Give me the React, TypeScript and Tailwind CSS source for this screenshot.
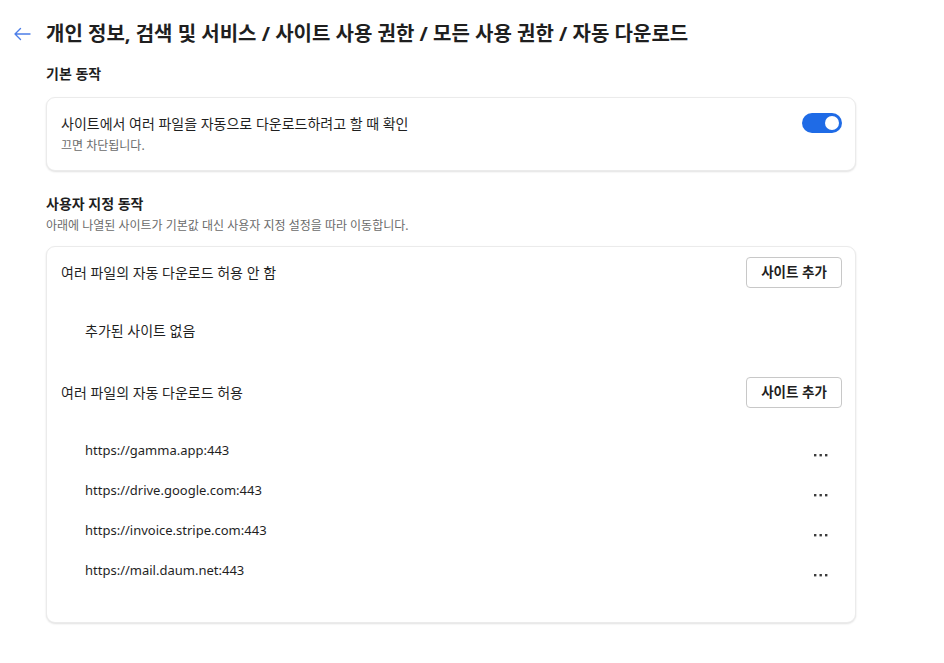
import React from "react";

const font = { fontFamily: '"Noto Sans", "Noto Sans CJK KR", sans-serif' };

function AddButton() {
  return (
    <button className="h-[31px] w-[96px] rounded-[4px] border border-[#c8c8c8] bg-white text-[13.5px] font-bold text-[#1f1f1f] leading-none">
      사이트 추가
    </button>
  );
}

function Dots() {
  return (
    <svg width="14" height="4" viewBox="0 0 14 4" className="translate-y-[4px]">
      <rect x="0" y="1" width="2.4" height="2.4" fill="#3c3c3c" />
      <rect x="5.5" y="1" width="2.4" height="2.4" fill="#3c3c3c" />
      <rect x="11" y="1" width="2.4" height="2.4" fill="#3c3c3c" />
    </svg>
  );
}

const sites = [
  "https://gamma.app:443",
  "https://drive.google.com:443",
  "https://invoice.stripe.com:443",
  "https://mail.daum.net:443",
];

export default function App() {
  return (
    <div className="min-h-[663px] w-[944px] bg-white text-[#1f1f1f]" style={font}>
      <div className="mt-[10px] flex h-[48px] items-center">
        <div className="flex w-[46px] justify-center">
          <svg width="18" height="14" viewBox="0 0 18 14" className="ml-[-2px]">
            <path d="M17 7H2M7.5 1.5L2 7l5.5 5.5" fill="none" stroke="#4c7ee8" strokeWidth="1.4" strokeLinecap="round" strokeLinejoin="round" />
          </svg>
        </div>
        <h1 className="text-[20px] font-bold text-[#1f1f1f]">
          개인 정보, 검색 및 서비스 / 사이트 사용 권한 / 모든 사용 권한 / 자동 다운로드
        </h1>
      </div>

      <div className="ml-[46px] w-[810px]">
        <div className="h-[32px] text-[14px] font-bold leading-[32px]">기본 동작</div>

        <div className="mt-[7px] flex items-center justify-between rounded-[9px] border border-[#ebebeb] bg-white pb-[16px] pl-[14px] pr-[13px] pt-[15px] shadow-[0_1px_2px_rgba(0,0,0,0.12)]">
          <div className="flex flex-col">
            <div className="text-[14px] leading-[20px]">사이트에서 여러 파일을 자동으로 다운로드하려고 할 때 확인</div>
            <div className="mt-[4px] text-[12px] leading-[16px] text-[#6b6b6b]">끄면 차단됩니다.</div>
          </div>
          <div className="mb-[21px] flex h-[20px] w-[40px] items-center justify-end rounded-full bg-[#1f6be6] pr-[3px]">
            <div className="h-[14px] w-[14px] rounded-full bg-white" />
          </div>
        </div>

        <div className="mt-[23px] text-[14px] font-bold leading-[20px]">사용자 지정 동작</div>
        <div className="mt-[4px] text-[12px] leading-[16px] text-[#6b6b6b]">
          아래에 나열된 사이트가 기본값 대신 사용자 지정 설정을 따라 이동합니다.
        </div>

        <div className="mt-[12px] rounded-[9px] border border-[#ebebeb] bg-white pb-[31px] pl-[14px] pr-[13px] pt-[10px] shadow-[0_1px_2px_rgba(0,0,0,0.12)]">
          <div className="flex h-[31px] items-center justify-between">
            <span className="text-[14px]">여러 파일의 자동 다운로드 허용 안 함</span>
            <AddButton />
          </div>
          <div className="mt-[22px] flex h-[40px] items-center pl-[24px] text-[14px]">추가된 사이트 없음</div>
          <div className="mt-[27px] flex h-[31px] items-center justify-between">
            <span className="text-[14px]">여러 파일의 자동 다운로드 허용</span>
            <AddButton />
          </div>
          <div className="mt-[23px] flex flex-col">
            {sites.map((s) => (
              <div key={s} className="flex h-[40px] items-center justify-between pl-[24px] pr-[14px]">
                <span className="text-[13px]">{s}</span>
                <Dots />
              </div>
            ))}
          </div>
        </div>
      </div>
    </div>
  );
}
